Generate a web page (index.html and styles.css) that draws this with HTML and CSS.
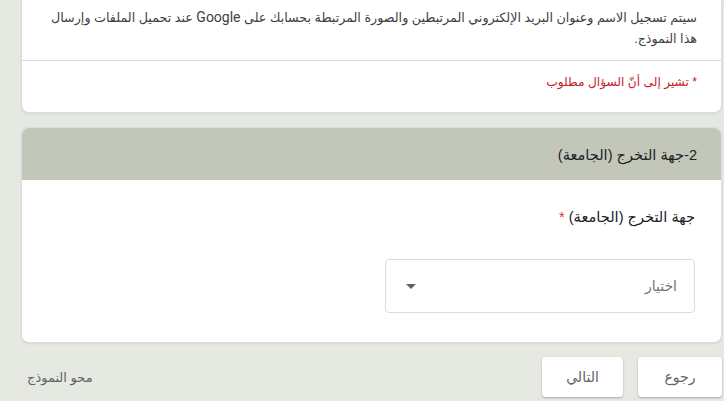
FILE: index.html
```html
<!DOCTYPE html>
<html lang="ar" dir="rtl">
<head>
<meta charset="utf-8">
<link rel="stylesheet" href="styles.css">
</head>
<body>
<div class="page">
  <div class="card card-top">
    <div class="notice">
      <p>سيتم تسجيل الاسم وعنوان البريد الإلكتروني المرتبطين والصورة المرتبطة بحسابك على <span class="latin">Google</span> عند تحميل الملفات وإرسال هذا النموذج.</p>
    </div>
    <div class="required-note">* تشير إلى أنّ السؤال مطلوب</div>
  </div>

  <div class="card card-section">
    <div class="section-head">2-جهة التخرج (الجامعة)</div>
    <div class="section-body">
      <div class="question">جهة التخرج (الجامعة) <span class="star">*</span></div>
      <div class="select">
        <span class="placeholder">اختيار</span>
        <svg class="arrow" width="10" height="5" viewBox="0 0 10 5"><path d="M0 0 L10 0 L5 5 Z" fill="#5f6368"/></svg>
      </div>
    </div>
  </div>

  <div class="footer">
    <div class="buttons">
      <button class="btn btn-back">رجوع</button>
      <button class="btn btn-next">التالي</button>
    </div>
    <span class="clear">محو النموذج</span>
  </div>
</div>
</body>
</html>
```

FILE: styles.css
```css
html, body {
  margin: 0;
  padding: 0;
  background: #e6e8e2;
  height: 100%;
  overflow: hidden;
}
body {
  font-family: "Liberation Sans", Arial, "DejaVu Sans", sans-serif;
  color: #202124;
}
.page {
  padding: 0 2px 0 21px;
  display: flex;
  flex-direction: column;
}
.card {
  background: #fff;
  border: 1px solid #dadce0;
  border-radius: 8px;
  box-shadow: 0 1px 2px rgba(0,0,0,0.08);
}
.card-top {
  border-top: none;
  border-radius: 0 0 8px 8px;
}
.notice {
  padding: 7px 24px 10px 20px;
  border-bottom: 1px solid #dadce0;
}
.notice p {
  margin: 0;
  font-size: 12.7px;
  line-height: 21px;
  color: #3c4043;
}
.latin {
  font-family: Roboto, "Liberation Sans", sans-serif;
  font-size: 14px;
}
.required-note {
  padding: 11px 24px 20px;
  font-size: 12.2px;
  line-height: 20px;
  color: #c5221f;
}
.card-section {
  margin-top: 14px;
  overflow: hidden;
}
.section-head {
  background: #c3c7b9;
  height: 52px;
  display: flex;
  align-items: center;
  padding: 0 24px;
  font-size: 14.6px;
  color: #202124;
}
.section-body {
  padding: 25px 26px 29px;
}
.question {
  font-size: 14.6px;
  line-height: 24px;
  color: #202124;
}
.star {
  color: #d93025;
}
.select {
  margin-top: 30px;
  width: 310px;
  height: 54px;
  box-sizing: border-box;
  border: 1px solid #dadce0;
  border-radius: 4px;
  display: flex;
  align-items: center;
  justify-content: space-between;
  padding: 0 17px 0 20px;
}
.placeholder {
  font-size: 14px;
  color: #70757a;
}
.arrow {
  display: block;
}
.footer {
  margin-top: 14px;
  display: flex;
  align-items: center;
  justify-content: space-between;
  padding-left: 6px;
}
.buttons {
  display: flex;
  gap: 15px;
}
.btn {
  height: 40px;
  background: #fff;
  border: none;
  border-radius: 4px;
  box-shadow: 0 1px 2px rgba(0,0,0,0.2), 0 1px 3px rgba(0,0,0,0.08);
  font-family: "Liberation Sans", Arial, "DejaVu Sans", sans-serif;
  font-size: 14px;
  color: #5f6368;
  padding: 0;
}
.btn-back { width: 84px; }
.btn-next { width: 81px; }
.clear {
  font-size: 13px;
  color: #5f6368;
}
```
